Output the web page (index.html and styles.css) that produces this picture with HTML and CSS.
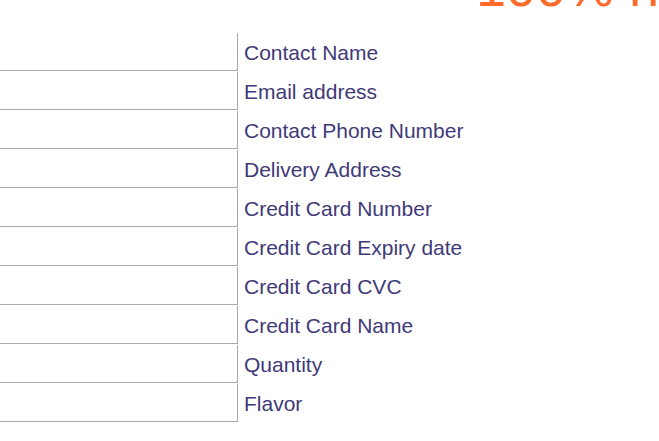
FILE: index.html
```html
<!DOCTYPE html>
<html lang="en">
<head>
<meta charset="utf-8">
<title>Order form</title>
<link rel="stylesheet" href="styles.css">
</head>
<body>
<h1 class="title">100% natural</h1>
<form class="order-form">
  <div class="row"><input class="field" type="text"><label class="label">Contact Name</label></div>
  <div class="row"><input class="field" type="text"><label class="label">Email address</label></div>
  <div class="row"><input class="field" type="text"><label class="label">Contact Phone Number</label></div>
  <div class="row"><input class="field" type="text"><label class="label">Delivery Address</label></div>
  <div class="row"><input class="field" type="text"><label class="label">Credit Card Number</label></div>
  <div class="row"><input class="field" type="text"><label class="label">Credit Card Expiry date</label></div>
  <div class="row"><input class="field" type="text"><label class="label">Credit Card CVC</label></div>
  <div class="row"><input class="field" type="text"><label class="label">Credit Card Name</label></div>
  <div class="row"><input class="field" type="text"><label class="label">Quantity</label></div>
  <div class="row"><input class="field" type="text"><label class="label">Flavor</label></div>
</form>
</body>
</html>
```

FILE: styles.css
```css
html, body {
  margin: 0;
  padding: 0;
  background: #ffffff;
  overflow: hidden;
}
body {
  width: 659px;
  height: 441px;
  font-family: "Liberation Sans", Arial, sans-serif;
}
.title {
  margin: -40px 0 19px 0;
  padding-left: 476px;
  font-size: 54px;
  line-height: 54px;
  font-weight: normal;
  color: #ff6a2b;
  white-space: nowrap;
}
.order-form {
  display: flex;
  flex-direction: column;
  gap: 1px;
}
.row {
  display: flex;
  align-items: flex-start;
  height: 38px;
}
.field {
  box-sizing: border-box;
  width: 238px;
  height: 38px;
  margin: 0;
  padding: 0 6px;
  border: none;
  border-right: 1px solid #a9a9a9;
  border-bottom: 1px solid #a9a9a9;
  background: #ffffff;
  outline: none;
  font: inherit;
}
.label {
  margin-left: 6px;
  padding-top: 1px;
  font-size: 21px;
  line-height: 38px;
  color: #3f3a78;
  white-space: nowrap;
}
```
